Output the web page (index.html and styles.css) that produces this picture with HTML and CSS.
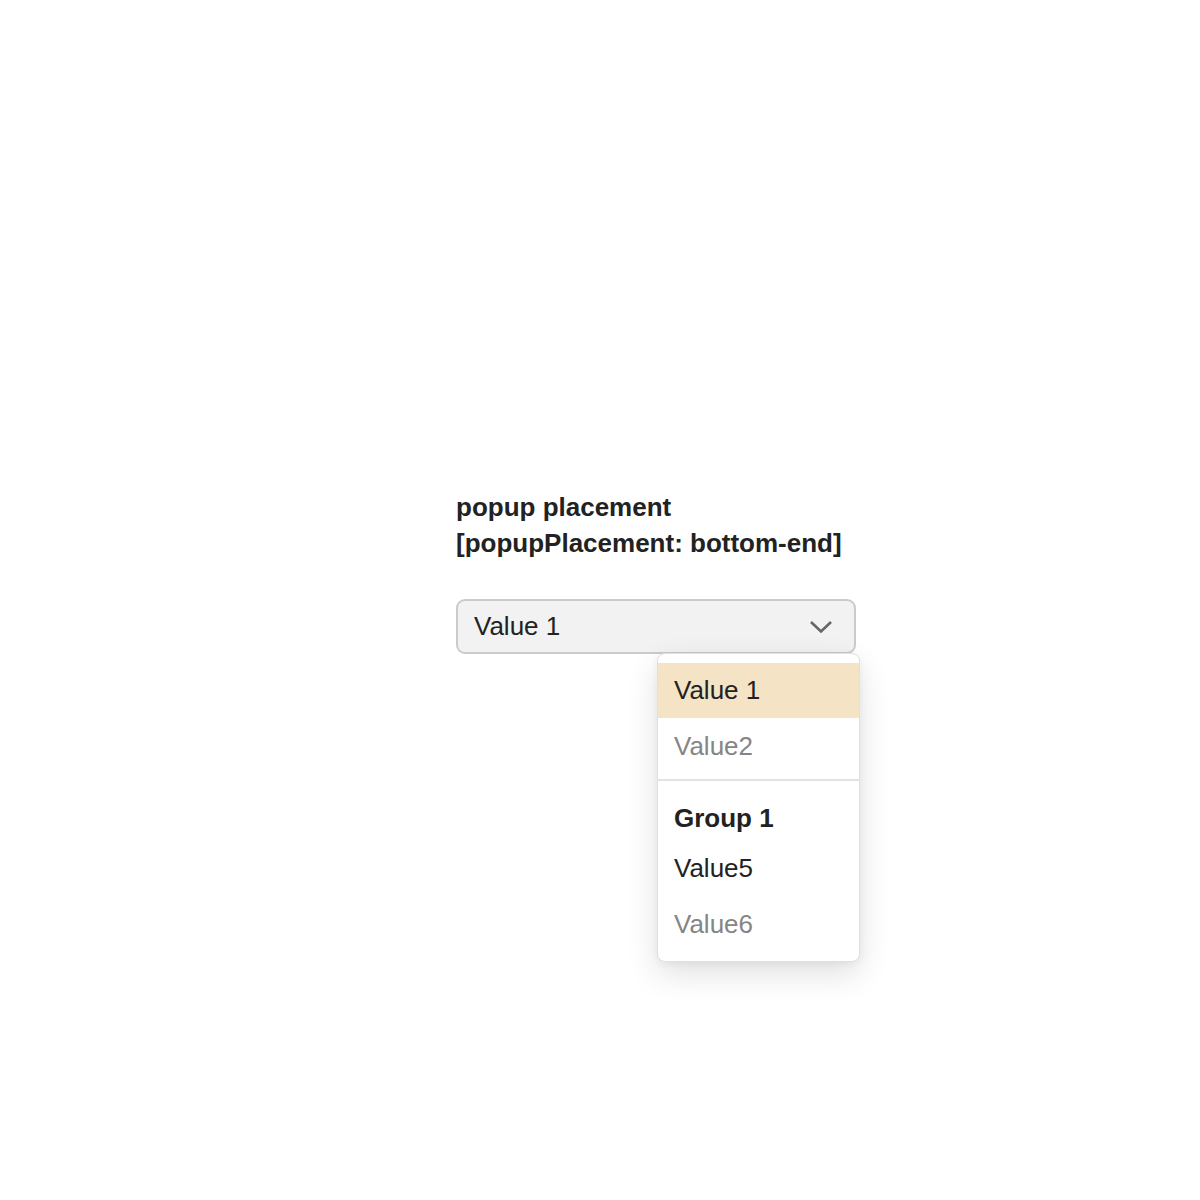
FILE: index.html
```html
<!DOCTYPE html>
<html>
<head>
<meta charset="utf-8">
<link rel="stylesheet" href="styles.css">
</head>
<body>
<div class="page">
  <div class="demo">
    <h2 class="title">popup placement<br>[popupPlacement: bottom-end]</h2>
    <div class="select-wrap">
      <div class="select">
        <span class="select-value">Value 1</span>
        <svg class="chevron" width="24" height="14" viewBox="0 0 24 14"><polyline points="2,2 12,11.5 22,2" fill="none" stroke="#666" stroke-width="2.6"/></svg>
      </div>
      <div class="dropdown-list">
        <div class="item selected">Value 1</div>
        <div class="item muted">Value2</div>
        <div class="sep"></div>
        <div class="group">Group 1</div>
        <div class="item">Value5</div>
        <div class="item muted">Value6</div>
      </div>
    </div>
  </div>
</div>
</body>
</html>
```

FILE: styles.css
```css
html, body {
  margin: 0;
  padding: 0;
  background: #fff;
}
body {
  font-family: "Liberation Sans", Arial, sans-serif;
  color: #222;
  min-height: 1200px;
}
.page {
  box-sizing: border-box;
  min-height: 1200px;
  padding-top: 489px;
  padding-left: 456px;
}
.demo {
  width: 400px;
}
.title {
  margin: 0;
  font-size: 26px;
  line-height: 36px;
  font-weight: bold;
  color: #222;
}
.select-wrap {
  position: relative;
  margin-top: 38px;
}
.select {
  box-sizing: border-box;
  width: 400px;
  height: 55px;
  border: 2px solid #cbcbcb;
  border-radius: 9px;
  background: #f2f2f2;
  display: flex;
  align-items: center;
  justify-content: space-between;
  padding: 0 21px 0 16px;
  font-size: 26px;
}
.select-value {
  color: #222;
}
.chevron {
  display: block;
  margin-top: 1px;
}
.dropdown-list {
  position: absolute;
  left: 201px;
  top: 54px;
  width: 203px;
  box-sizing: border-box;
  background: #fff;
  border: 1px solid #e0e0e0;
  border-radius: 8px;
  padding: 9px 0 9px;
  box-shadow: 0 12px 32px rgba(0, 0, 0, 0.12), 0 2px 8px rgba(0, 0, 0, 0.05);
  font-size: 26px;
  z-index: 2;
}
.item {
  height: 56px;
  line-height: 56px;
  padding-left: 16px;
  color: #222;
}
.item.selected {
  background: #f5e3c6;
  height: 55px;
  line-height: 55px;
}
.item.muted {
  color: #858585;
}
.sep {
  height: 2px;
  background: #e2e2e2;
  margin-top: 5px;
}
.group {
  padding: 25px 0 10px 16px;
  line-height: 24px;
  font-weight: bold;
  color: #222;
}
```
